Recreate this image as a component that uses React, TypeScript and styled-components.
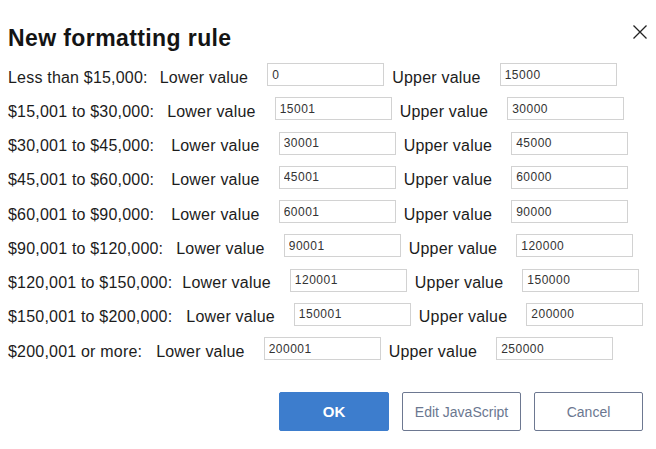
import React from "react";
import styled, { createGlobalStyle } from "styled-components";

const Global = createGlobalStyle`
  html, body { margin: 0; padding: 0; background: #ffffff; }
  body { font-family: "Liberation Sans", Arial, sans-serif; color: #1c1c1c; }
`;

const Dialog = styled.div`
  width: 656px;
  height: 449px;
  box-sizing: border-box;
  padding: 0 13px 0 8px;
  display: flex;
  flex-direction: column;
`;

const Header = styled.div`
  display: flex;
  justify-content: space-between;
  align-items: center;
  height: 40px;
  margin-top: 18px;
`;

const Title = styled.h1`
  margin: 0;
  font-size: 23px;
  font-weight: 700;
  letter-spacing: 0.4px;
  color: #141414;
`;

const Close = styled.button`
  border: none;
  background: none;
  padding: 0;
  width: 16px;
  height: 16px;
  margin-right: -5px;
  margin-top: -12px;
  cursor: pointer;
  display: flex;
`;

const Rows = styled.div`
  display: flex;
  flex-direction: column;
  gap: 11.25px;
  margin-top: 5px;
`;

const Row = styled.div`
  display: flex;
  align-items: center;
  height: 23px;
  font-size: 16px;
  letter-spacing: 0.2px;
`;

const RangeLabel = styled.span<{ $gap: number }>`
  margin-right: ${(p) => p.$gap}px;
  white-space: nowrap;
  position: relative;
  top: 3px;
`;

const FieldLabel = styled.span`
  white-space: nowrap;
  margin-right: 19px;
  position: relative;
  top: 3px;
`;

const Input = styled.input`
  box-sizing: border-box;
  width: 117px;
  height: 23px;
  border: 1px solid #d2d2d2;
  border-radius: 0;
  padding: 0 0 0 4px;
  font-family: "Liberation Sans", Arial, sans-serif;
  font-size: 12px;
  letter-spacing: 0.5px;
  color: #333;
  margin-right: 8px;
  outline: none;
`;

const Footer = styled.div`
  display: flex;
  justify-content: flex-end;
  gap: 13px;
  margin-top: 32px;
`;

const Button = styled.button<{ $primary?: boolean; $w: number }>`
  box-sizing: border-box;
  width: ${(p) => p.$w}px;
  height: 39px;
  border-radius: 2px;
  font-family: "Liberation Sans", Arial, sans-serif;
  font-size: 14px;
  cursor: pointer;
  ${(p) =>
    p.$primary
      ? `background: #3d7dcd; border: 1px solid #3d7dcd; color: #ffffff; font-weight: 700; font-size: 15px;`
      : `background: #ffffff; border: 1px solid #6d7891; color: #6b7790;`}
`;

const rules = [
  { label: "Less than $15,000:", gap: 12, lo: "0", hi: "15000" },
  { label: "$15,001 to $30,000:", gap: 13, lo: "15001", hi: "30000" },
  { label: "$30,001 to $45,000:", gap: 17, lo: "30001", hi: "45000" },
  { label: "$45,001 to $60,000:", gap: 17, lo: "45001", hi: "60000" },
  { label: "$60,001 to $90,000:", gap: 17, lo: "60001", hi: "90000" },
  { label: "$90,001 to $120,000:", gap: 13, lo: "90001", hi: "120000" },
  { label: "$120,001 to $150,000:", gap: 10, lo: "120001", hi: "150000" },
  { label: "$150,001 to $200,000:", gap: 14, lo: "150001", hi: "200000" },
  { label: "$200,001 or more:", gap: 14, lo: "200001", hi: "250000" },
];

export default function App() {
  return (
    <>
      <Global />
      <Dialog>
        <Header>
          <Title>New formatting rule</Title>
          <Close aria-label="Close">
            <svg width="16" height="16" viewBox="0 0 16 16">
              <path d="M1.5 1.5 L14.5 14.5 M14.5 1.5 L1.5 14.5" stroke="#222" strokeWidth="1.3" fill="none" />
            </svg>
          </Close>
        </Header>
        <Rows>
          {rules.map((r, i) => (
            <Row key={i}>
              <RangeLabel $gap={r.gap}>{r.label}</RangeLabel>
              <FieldLabel>Lower value</FieldLabel>
              <Input defaultValue={r.lo} />
              <FieldLabel>Upper value</FieldLabel>
              <Input defaultValue={r.hi} />
            </Row>
          ))}
        </Rows>
        <Footer>
          <Button $primary $w={110}>OK</Button>
          <Button $w={119}>Edit JavaScript</Button>
          <Button $w={109}>Cancel</Button>
        </Footer>
      </Dialog>
    </>
  );
}
